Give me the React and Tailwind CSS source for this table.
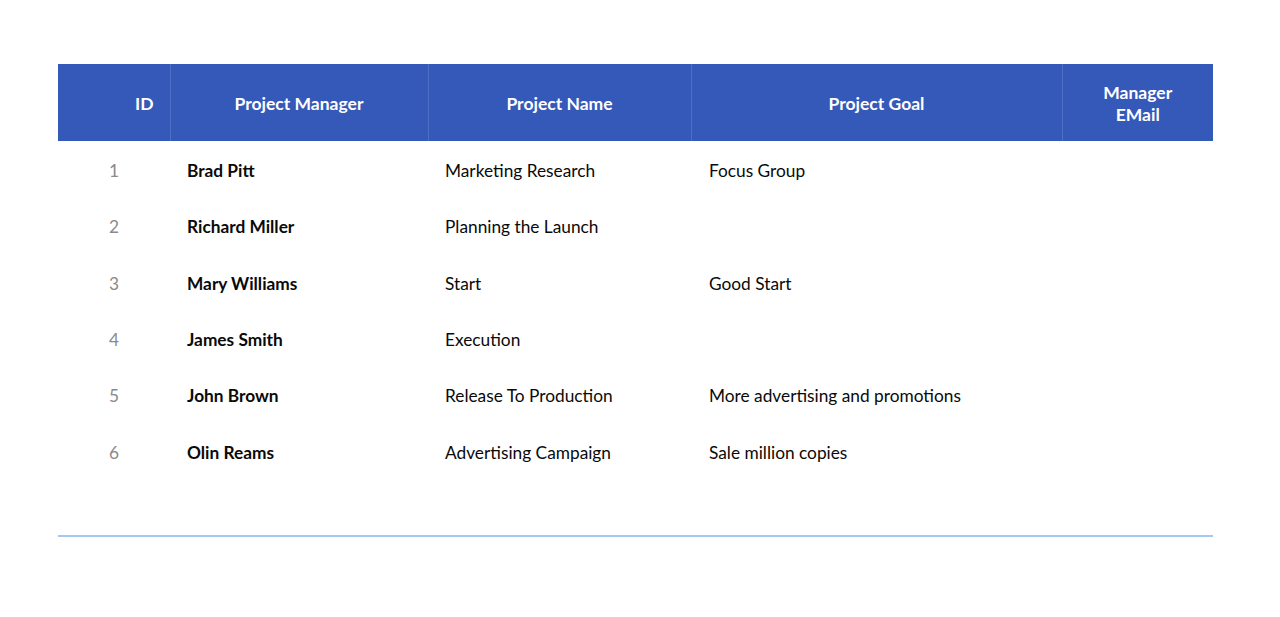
import React from "react";

const rows = [
  ["1", "Brad Pitt", "Marketing Research", "Focus Group"],
  ["2", "Richard Miller", "Planning the Launch", ""],
  ["3", "Mary Williams", "Start", "Good Start"],
  ["4", "James Smith", "Execution", ""],
  ["5", "John Brown", "Release To Production", "More advertising and promotions"],
  ["6", "Olin Reams", "Advertising Campaign", "Sale million copies"],
];

export default function App() {
  return (
    <div className="w-[1280px] h-[617px] bg-white pt-[64px] pl-[58px]" style={{ fontFamily: "Lato, 'Open Sans', sans-serif" }}>
      <table className="w-[1155px] table-fixed border-collapse border-b-2 border-[#a3c8f2]">
        <colgroup>
          <col className="w-[112px]" />
          <col className="w-[258px]" />
          <col className="w-[263px]" />
          <col className="w-[371px]" />
          <col className="w-[151px]" />
        </colgroup>
        <thead>
          <tr className="h-[77px] bg-[#3559b8] text-white text-[17.5px] font-bold leading-[22px]">
            <th className="text-right pr-[16px] pt-[2px] border-r border-[#4d6fc6]">ID</th>
            <th className="text-center pt-[2px] border-r border-[#4d6fc6]">Project Manager</th>
            <th className="text-center pt-[2px] border-r border-[#4d6fc6]">Project Name</th>
            <th className="text-center pt-[2px] border-r border-[#4d6fc6]">Project Goal</th>
            <th className="text-center pt-[2px]">Manager<br />EMail</th>
          </tr>
        </thead>
        <tbody className="text-[17.3px] text-[#0a0a0a]">
          {rows.map((r) => (
            <tr key={r[0]} className="h-[56.4px]">
              <td className="text-center pt-[3px] text-[#8a8a8a]">{r[0]}</td>
              <td className="pl-[17px] pt-[3px] font-bold">{r[1]}</td>
              <td className="pl-[17px] pt-[3px]">{r[2]}</td>
              <td className="pl-[18px] pt-[3px]">{r[3]}</td>
              <td></td>
            </tr>
          ))}
          <tr className="h-[56.4px]">
            <td></td><td></td><td></td><td></td><td></td>
          </tr>
        </tbody>
      </table>
    </div>
  );
}
